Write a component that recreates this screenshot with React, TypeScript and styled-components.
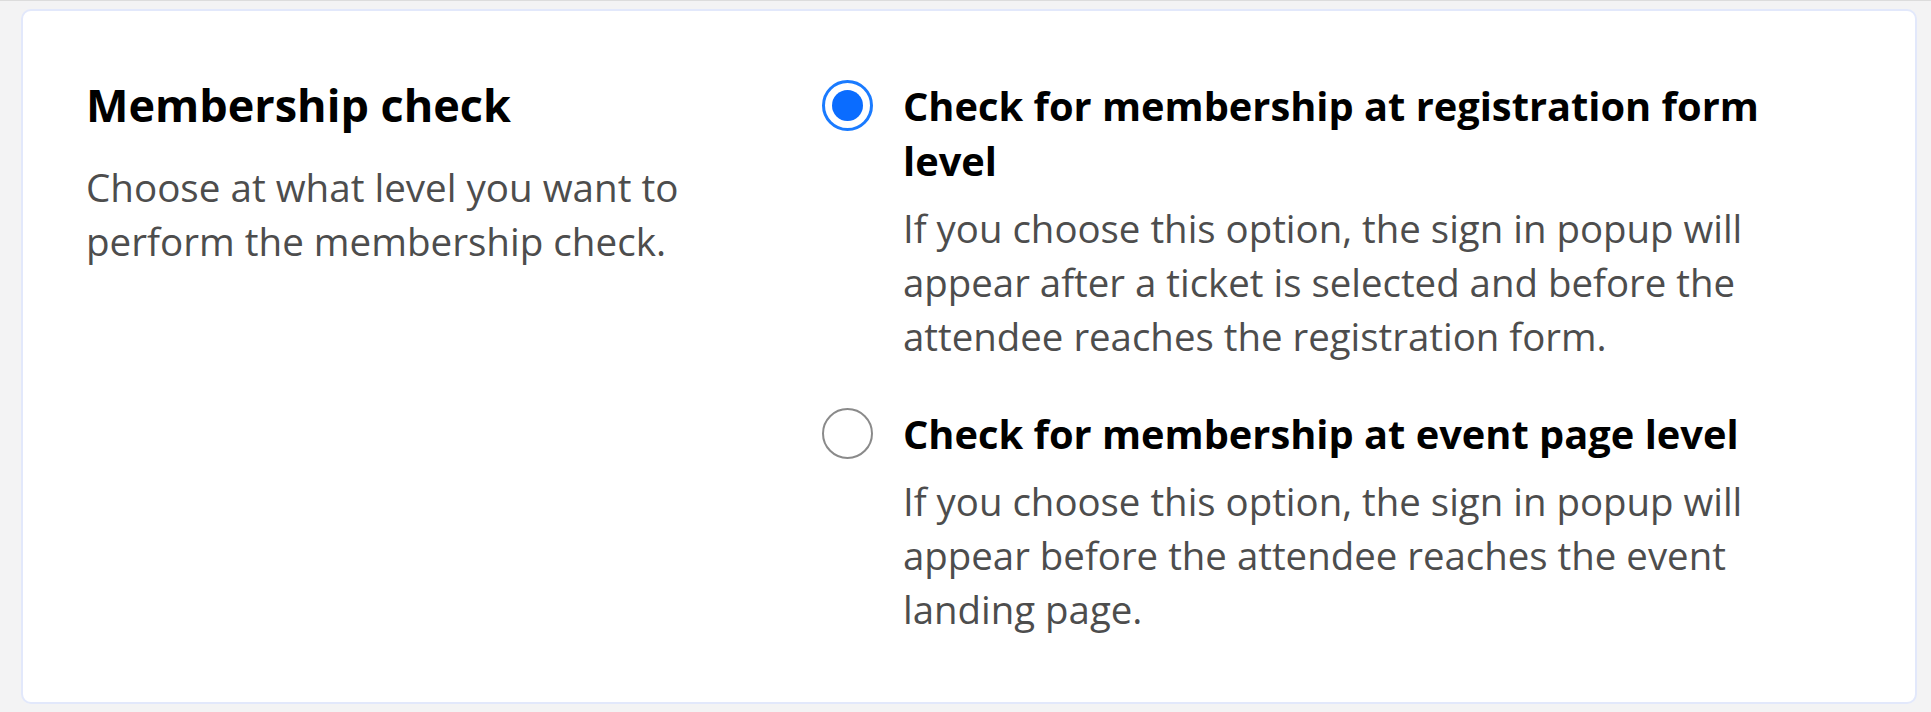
import React, { useState } from "react";
import styled, { createGlobalStyle } from "styled-components";

const Global = createGlobalStyle`
  html, body { margin: 0; padding: 0; background: #f3f3f4; }
  body { font-family: "Open Sans", "Noto Sans", sans-serif; border-top: 1px solid #dcdcdc; }
  * { box-sizing: border-box; }
`;

const Page = styled.div`
  padding: 8px 14px 8px 21px;
`;

const Card = styled.section`
  background: #fff;
  border: 2px solid #e2e8fb;
  border-radius: 10px;
  height: 695px;
  padding: 64px 67px 0 63px;
  display: grid;
  grid-template-columns: 660px 1fr;
  column-gap: 76px;
`;

const Intro = styled.div`
  display: flex;
  flex-direction: column;
  gap: 25px;
`;

const Title = styled.h2`
  margin: 0;
  font-size: 45px;
  line-height: 60px;
  font-weight: 700;
  color: #000;
`;

const Description = styled.p`
  margin: 0;
  font-size: 38.6px;
  line-height: 54px;
  color: #4d4d4d;
  width: 640px;
`;

const Options = styled.div`
  display: flex;
  flex-direction: column;
  gap: 43px;
  padding-top: 3px;
`;

const Option = styled.label`
  display: grid;
  grid-template-columns: 50px 1fr;
  column-gap: 31px;
  cursor: pointer;
`;

const Radio = styled.span<{ $checked: boolean }>`
  width: 51px;
  height: 51px;
  margin-top: 2px;
  border-radius: 50%;
  border: ${(p) => (p.$checked ? "3px solid #1a7bff" : "2.5px solid #8a8a8a")};
  display: flex;
  align-items: center;
  justify-content: center;
  background: #fff;
  &::after {
    content: "";
    width: 31px;
    height: 31px;
    border-radius: 50%;
    background: ${(p) => (p.$checked ? "#0a6cff" : "transparent")};
  }
`;

const OptionText = styled.div`
  display: flex;
  flex-direction: column;
  gap: 13px;
  max-width: 905px;
`;

const OptionTitle = styled.div`
  font-size: 39.8px;
  line-height: 55px;
  font-weight: 700;
  color: #000;
`;

const OptionDesc = styled.div`
  font-size: 38.4px;
  line-height: 54px;
  color: #4d4d4d;
  max-width: 880px;
`;

const options = [
  {
    id: "form",
    title: "Check for membership at registration form level",
    desc: "If you choose this option, the sign in popup will appear after a ticket is selected and before the attendee reaches the registration form.",
  },
  {
    id: "event",
    title: "Check for membership at event page level",
    desc: "If you choose this option, the sign in popup will appear before the attendee reaches the event landing page.",
  },
];

export default function App() {
  const [selected, setSelected] = useState("form");
  return (
    <Page>
      <Global />
      <Card>
        <Intro>
          <Title>Membership check</Title>
          <Description>Choose at what level you want to perform the membership check.</Description>
        </Intro>
        <Options>
          {options.map((o) => (
            <Option key={o.id} onClick={() => setSelected(o.id)}>
              <Radio $checked={selected === o.id} />
              <OptionText>
                <OptionTitle>{o.title}</OptionTitle>
                <OptionDesc>{o.desc}</OptionDesc>
              </OptionText>
            </Option>
          ))}
        </Options>
      </Card>
    </Page>
  );
}
